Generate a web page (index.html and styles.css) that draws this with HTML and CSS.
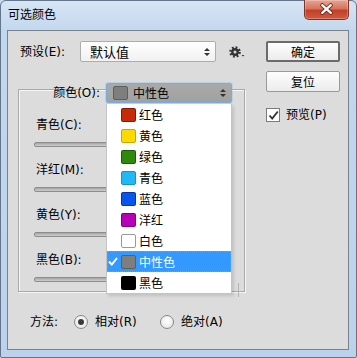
FILE: index.html
```html
<!DOCTYPE html>
<html lang="zh-CN">
<head>
<meta charset="utf-8">
<title>可选颜色</title>
<link rel="stylesheet" href="styles.css">
</head>
<body>
<div class="window">
  <div class="titlebar">
    <span class="title">可选颜色</span>
    <div class="close">
      <svg width="45" height="20" viewBox="0 0 45 20">
        <path d="M18 5 L27 13 M27 5 L18 13" stroke="#6e2418" stroke-width="4.2" stroke-linecap="round" fill="none"/>
        <path d="M18 5 L27 13 M27 5 L18 13" stroke="#ffffff" stroke-width="2.4" stroke-linecap="round" fill="none"/>
      </svg>
    </div>
  </div>
  <div class="content">
    <div class="top">
      <div class="left">
        <div class="preset-row">
          <span class="preset-lbl">预设(E):</span>
          <div class="preset-select">
            <span class="preset-val">默认值</span>
            <svg class="updown" width="6" height="8" viewBox="0 0 6 8"><path d="M0 3 L3 0 L6 3Z M0 5 L3 8 L6 5Z" fill="#333"/></svg>
          </div>
          <svg class="gear" width="16" height="12" viewBox="0 0 16 12">
            <circle cx="6" cy="6" r="4.6" fill="none" stroke="#333" stroke-width="2.4" stroke-dasharray="1.8 1.81"/>
            <circle cx="6" cy="6" r="3.9" fill="#333"/>
            <circle cx="6" cy="6" r="1.5" fill="#dcdcdc"/>
            <path d="M12.5 9 L15.5 9 L14 10.6Z" fill="#333"/>
          </svg>
        </div>
        <div class="group">
          <div class="group-head">
            <span class="color-lbl">颜色(O):</span>
            <div class="color-wrap">
              <div class="color-select">
                <span class="swatch sw-gray"></span>
                <span class="color-val">中性色</span>
                <svg class="updown" width="6" height="8" viewBox="0 0 6 8"><path d="M0 3 L3 0 L6 3Z M0 5 L3 8 L6 5Z" fill="#333"/></svg>
              </div>
              <ul class="menu">
                <li class="item"><span class="tick"></span><span class="swatch sw-red"></span>红色</li>
                <li class="item"><span class="tick"></span><span class="swatch sw-yellow"></span>黄色</li>
                <li class="item"><span class="tick"></span><span class="swatch sw-green"></span>绿色</li>
                <li class="item"><span class="tick"></span><span class="swatch sw-cyan"></span>青色</li>
                <li class="item"><span class="tick"></span><span class="swatch sw-blue"></span>蓝色</li>
                <li class="item"><span class="tick"></span><span class="swatch sw-magenta"></span>洋红</li>
                <li class="item"><span class="tick"></span><span class="swatch sw-white"></span>白色</li>
                <li class="item selected"><span class="tick"><svg width="10" height="9" viewBox="0 0 10 9"><path d="M1 4.5 L3.8 7.5 L9 1" stroke="#fff" stroke-width="2" fill="none"/></svg></span><span class="swatch sw-gray"></span>中性色</li>
                <li class="item"><span class="tick"></span><span class="swatch sw-black"></span>黑色</li>
              </ul>
            </div>
            <span class="group-edge"></span>
          </div>
          <div class="slider first"><span class="slider-lbl">青色(C):</span><div class="track"></div></div>
          <div class="slider"><span class="slider-lbl">洋红(M):</span><div class="track"></div></div>
          <div class="slider"><span class="slider-lbl">黄色(Y):</span><div class="track"></div></div>
          <div class="slider"><span class="slider-lbl">黑色(B):</span><div class="track"></div></div>
        </div>
      </div>
      <div class="right">
        <div class="btn btn-default">确定</div>
        <div class="btn btn-reset">复位</div>
        <div class="check">
          <span class="box"><svg width="11" height="11" viewBox="0 0 11 11"><path d="M1.5 5.5 L4.2 8.6 L9.8 1.5" stroke="#333" stroke-width="1.8" fill="none"/></svg></span>
          <span class="check-lbl">预览(P)</span>
        </div>
      </div>
    </div>
    <div class="method">
      <span class="method-lbl">方法:</span>
      <div class="option opt-rel"><span class="radio on"></span><span>相对(R)</span></div>
      <div class="option"><span class="radio"></span><span>绝对(A)</span></div>
    </div>
  </div>
</div>
</body>
</html>
```

FILE: styles.css
```css
* { box-sizing: border-box; }
html, body {
  margin: 0;
  padding: 0;
  width: 357px;
  height: 358px;
  overflow: hidden;
  background: #c6d9ee;
}
body {
  font-family: "DejaVu Sans", "Noto Sans CJK SC", sans-serif;
  font-size: 12px;
  color: #000;
  line-height: 16px;
}
.window {
  width: 357px;
  height: 358px;
  border: 1px solid #62758a;
  border-radius: 6px 6px 2px 2px;
  background: linear-gradient(180deg, #d7e5f4 0px, #c3d7ee 30px, #bcd2ec 100%);
  padding: 0 7px 7px 6px;
  display: flex;
  flex-direction: column;
}
.titlebar {
  height: 29px;
  display: flex;
  justify-content: space-between;
  align-items: flex-start;
}
.title {
  padding: 5px 0 0 1px;
  font-family: "Noto Sans CJK SC", sans-serif;
}
.close {
  margin-top: -1px;
  width: 45px;
  height: 20px;
  border: 1px solid #7d3427;
  border-top: none;
  border-radius: 0 0 5px 5px;
  background: linear-gradient(180deg, #e8a594 0%, #d8735d 45%, #c0402a 55%, #d35a3f 100%);
  box-shadow: inset 0 0 0 1px rgba(255,255,255,0.25);
  display: flex;
}
.content {
  flex: 1;
  border: 1px solid #74838f;
  background: #dcdcdc;
  display: flex;
  flex-direction: column;
}
.top {
  display: flex;
  justify-content: space-between;
  padding: 0 8px 0 10px;
}
.left { width: 227px; }
.preset-row {
  margin-top: 10px;
  height: 21px;
  display: flex;
  align-items: center;
  padding-left: 2px;
}
.preset-lbl { width: 60px; }
.preset-select {
  width: 136px;
  height: 21px;
  border: 1px solid #adadad;
  border-radius: 2px;
  background: linear-gradient(180deg, #fefefe, #f1f1f1);
  display: flex;
  align-items: center;
  justify-content: space-between;
  padding: 0 5px 0 9px;
}
.preset-val { font-size: 13px; font-family: "Noto Sans CJK SC", sans-serif; }
.gear { margin-left: 13px; margin-top: 1px; }
.group {
  margin-top: 27px;
  height: 203px;
  border: 1px solid #a9a9a9;
  box-shadow: inset 1px 1px 0 #f6f6f6, 1px 1px 0 #f6f6f6;
}
.group-head {
  margin-top: -7px;
  height: 20px;
  display: flex;
  align-items: center;
}
.color-lbl {
  width: 81px;
  text-align: right;
  margin-right: 6px;
}
.color-wrap {
  position: relative;
  width: 126px;
  height: 20px;
}
.group-edge {
  align-self: flex-end;
  margin-left: 6px;
  width: 1px;
  height: 14px;
  margin-bottom: -194px;
  border-left: 1px solid #b4b4b4;
}
.color-select {
  height: 20px;
  border: 1px solid #79ace0;
  border-radius: 2px;
  background: linear-gradient(180deg, #a9a9a9, #a1a1a1);
  box-shadow: 0 0 0 1px rgba(150,195,240,0.45);
  display: flex;
  align-items: center;
  padding: 0 5px 0 6px;
}
.color-select .swatch { margin-right: 5px; }
.color-val { flex: 1; font-family: "Noto Sans CJK SC", sans-serif; }
.swatch {
  display: inline-block;
  width: 15px;
  height: 14px;
  border-radius: 2px;
  border: 1px solid rgba(0,0,0,0.35);
  flex: none;
}
.sw-gray { background: #7e7e7e; border-color: #5e5e5e; }
.sw-red { background: #c62a07; }
.sw-yellow { background: #fcd900; border-color: #c8a800; }
.sw-green { background: #2f8a0c; }
.sw-cyan { background: #20b8f7; border-color: #1a90c4; }
.sw-blue { background: #0a55ee; }
.sw-magenta { background: #b800b8; }
.sw-white { background: #ffffff; border-color: #9a9a9a; }
.sw-black { background: #000000; }
.menu {
  position: absolute;
  top: 21px;
  left: 0;
  width: 126px;
  margin: 0;
  padding: 0;
  list-style: none;
  background: #ffffff;
  border: 1px solid #c4c4c4;
  border-top: none;
  box-shadow: 2px 2px 3px rgba(0,0,0,0.12);
  z-index: 2;
  font-family: "Noto Sans CJK SC", sans-serif;
}
.item {
  height: 21px;
  display: flex;
  align-items: center;
}
.tick {
  width: 14px;
  height: 21px;
  display: flex;
  align-items: center;
  padding-left: 1px;
  flex: none;
}
.item .swatch { margin-right: 3px; }
.item.selected {
  background: #3399ff;
  color: #fff;
  outline: 1px dotted #e8891c;
  outline-offset: -1px;
}
.slider { margin-top: 15px; }
.slider.first { margin-top: 14px; }
.slider-lbl {
  display: block;
  padding-left: 17px;
  height: 16px;
}
.track {
  margin: 9px 0 0 15px;
  width: 190px;
  height: 5px;
  border: 1px solid #8d8d8d;
  border-radius: 2px;
  background: linear-gradient(180deg, #a4a4a4, #cfcfcf);
}
.right {
  width: 74px;
  padding-top: 10px;
  display: flex;
  flex-direction: column;
}
.btn {
  height: 21px;
  border-radius: 2px;
  display: flex;
  align-items: center;
  justify-content: center;
  background: linear-gradient(180deg, #fdfdfd, #ececec);
  font-family: "Noto Sans CJK SC", sans-serif;
}
.btn-default {
  border: 2px solid #6b6b6b;
}
.btn-reset {
  margin-top: 9px;
  border: 1px solid #9a9a9a;
}
.check {
  margin-top: 15px;
  display: flex;
  align-items: center;
}
.box {
  width: 14px;
  height: 14px;
  border: 1px solid #7b7b7b;
  background: #ffffff;
  display: flex;
  align-items: center;
  justify-content: center;
  margin-right: 6px;
}
.method {
  margin-top: 22px;
  padding-left: 22px;
  height: 16px;
  display: flex;
  align-items: center;
}
.method-lbl { width: 44px; }
.option {
  display: flex;
  align-items: center;
}
.opt-rel { width: 86px; }
.radio {
  width: 14px;
  height: 14px;
  border-radius: 50%;
  border: 1px solid #888;
  background: radial-gradient(circle at 50% 40%, #ffffff, #e2e2e2);
  margin-right: 7px;
  display: flex;
  align-items: center;
  justify-content: center;
  flex: none;
}
.radio.on::after {
  content: "";
  width: 6px;
  height: 6px;
  border-radius: 50%;
  background: #3a3a3a;
}
```
